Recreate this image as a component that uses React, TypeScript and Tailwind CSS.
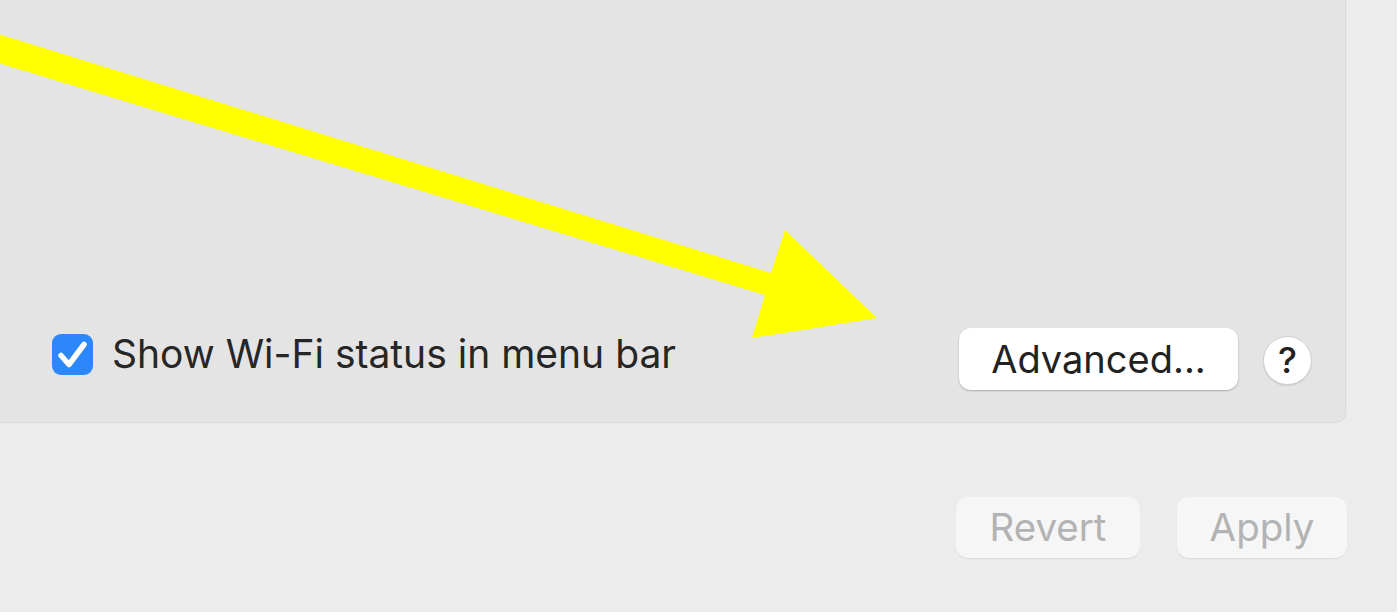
import React from 'react'

const font = { fontFamily: 'Inter, "Liberation Sans", sans-serif' }

function Checkbox() {
    return (
        <div className="w-[41px] h-[41px] rounded-[9px] bg-[#2b87fa] flex items-center justify-center shrink-0">
            <svg width="41" height="41" viewBox="0 0 41 41">
                <path d="M9 21.5 L17 30.5 L32 10.5" fill="none" stroke="white" strokeWidth="5.5" strokeLinecap="round" strokeLinejoin="round" />
            </svg>
        </div>
    )
}

export default function App() {
    return (
        <div className="w-[1400px] h-[616px] bg-white overflow-hidden" style={font}>
            <div className="relative w-[1397px] h-[612px] bg-[#ececec] flex flex-col">
                {/* inner panel */}
                <div className="w-[1346px] h-[423px] bg-[#e4e4e4] rounded-br-[10px] border-r border-b border-[#d9d9d9] flex flex-col justify-end pb-[32px] pl-[52px] pr-[33px]">
                    <div className="flex items-center justify-between h-[62px]">
                        <div className="flex items-center gap-[19px] mb-[9px]">
                            <Checkbox />
                            <span className="text-[39px] text-[#262626]">Show Wi-Fi status in menu bar</span>
                        </div>
                        <div className="flex items-center gap-[25px]">
                            <button className="w-[279px] h-[62px] rounded-[12px] bg-white shadow-[0_1px_2px_rgba(0,0,0,0.25)] text-[38px] text-[#222]">
                                Advanced...
                            </button>
                            <div className="w-[49px] h-[49px] rounded-full bg-white border border-[#cfcfcf] shadow-[0_1px_1px_rgba(0,0,0,0.1)] flex items-center justify-center text-[36px] font-medium text-[#222] mt-[2px]">
                                ?
                            </div>
                        </div>
                    </div>
                </div>

                {/* footer buttons */}
                <div className="flex justify-end gap-[37px] pr-[50px] mt-[74px]">
                    <button className="w-[184px] h-[61px] rounded-[12px] bg-[#f6f6f6] shadow-[0_1px_1px_rgba(0,0,0,0.08)] text-[38.5px] text-[#b3b3b3]">
                        Revert
                    </button>
                    <button className="w-[170px] h-[61px] rounded-[12px] bg-[#f6f6f6] shadow-[0_1px_1px_rgba(0,0,0,0.08)] text-[38.5px] text-[#b3b3b3]">
                        Apply
                    </button>
                </div>

                {/* annotation arrow */}
                <svg className="absolute left-0 top-0 pointer-events-none" width="900" height="360" viewBox="0 0 900 360">
                    <polygon points="-5,33 771,273 785,230 877,318 752,338 765,295 -5,62" fill="#ffff00" />
                </svg>
            </div>
        </div>
    )
}
